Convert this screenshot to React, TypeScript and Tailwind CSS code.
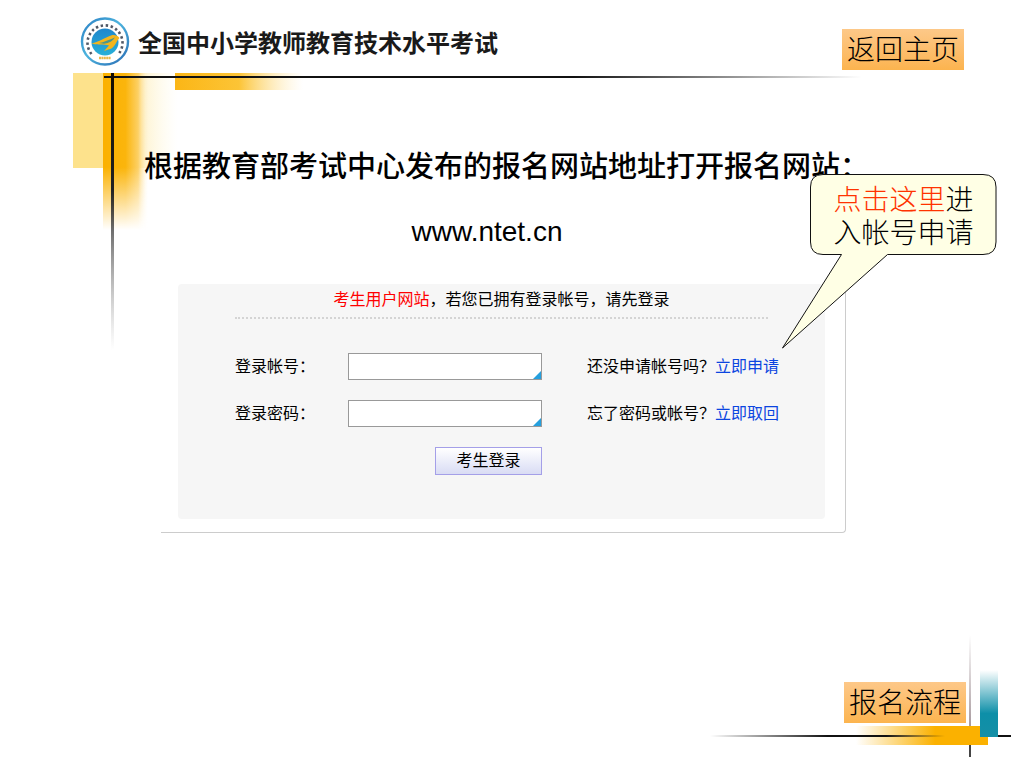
import type { ReactNode } from 'react';

const fields = [
  {
    id: 'account',
    label: '登录帐号：',
    type: 'text',
    question: '还没申请帐号吗？',
    action: '立即申请',
  },
  {
    id: 'password',
    label: '登录密码：',
    type: 'password',
    question: '忘了密码或帐号？',
    action: '立即取回',
  },
];

function Logo() {
  return (
    <svg width="50" height="50" viewBox="0 0 50 50" className="shrink-0" aria-hidden="true">
      <defs>
        <linearGradient id="ring" x1="0" y1="0" x2="1" y2="1">
          <stop offset="0" stopColor="#2b7fc4" />
          <stop offset="0.45" stopColor="#4db4de" />
          <stop offset="1" stopColor="#2a6cb4" />
        </linearGradient>
        <linearGradient id="globe" x1="0" y1="0" x2="0" y2="1">
          <stop offset="0" stopColor="#1f86cc" />
          <stop offset="1" stopColor="#27b0d8" />
        </linearGradient>
      </defs>
      <circle cx="25" cy="24.5" r="23" fill="#fff" stroke="url(#ring)" strokeWidth="2.4" />
      <path
        d="M11.5 37 A17.5 17.5 0 1 1 38.5 37"
        fill="none"
        stroke="#505866"
        strokeWidth="2.6"
        strokeDasharray="2.4 2.6"
      />
      <circle cx="25" cy="25" r="13.5" fill="url(#globe)" />
      <path d="M19 41 H31" fill="none" stroke="#e8b84a" strokeWidth="2.6" strokeDasharray="2 0.4" />
      <path
        d="M11.5 26.5 C19 25 26 20 31 18.5 C34 17.5 37 18 39.5 21 C37 23 36 28 31.5 31.5 C29 32.5 26.5 33 24 34 L29 28.5 C24 27 18 28.5 11.5 26.5Z"
        fill="#f3b51c"
      />
      <path d="M19 26 C24 25.5 29 22.5 35 20.5 C33 24 29 26 24 26.8Z" fill="#4a958c" />
    </svg>
  );
}

function TopDecoration() {
  return (
    <svg width="100%" height="360" className="pointer-events-none absolute inset-x-0 top-0" aria-hidden="true">
      <defs>
        <linearGradient id="goldRight">
          <stop offset="0" stopColor="#fbb100" />
          <stop offset="0.5" stopColor="#fbb50c" />
          <stop offset="0.78" stopColor="#fdd065" />
          <stop offset="1" stopColor="#fef0c8" stopOpacity="0" />
        </linearGradient>
        <linearGradient id="paleRight">
          <stop offset="0" stopColor="#fde6a4" />
          <stop offset="0.5" stopColor="#fef2cc" />
          <stop offset="1" stopColor="#fffbe8" stopOpacity="0" />
        </linearGradient>
        <linearGradient id="fadeDown" x1="0" y1="0" x2="0" y2="1">
          <stop offset="0" stopColor="#fff" />
          <stop offset="0.6" stopColor="#fff" />
          <stop offset="1" stopColor="#000" />
        </linearGradient>
        <mask id="goldMask">
          <rect x="100" y="73" width="60" height="157" fill="url(#fadeDown)" />
        </mask>
        <linearGradient id="barRight">
          <stop offset="0" stopColor="#fbb616" />
          <stop offset="0.5" stopColor="#fcc436" />
          <stop offset="1" stopColor="#fee9b0" stopOpacity="0" />
        </linearGradient>
        <linearGradient id="lineRight">
          <stop offset="0" stopColor="#111" />
          <stop offset="0.62" stopColor="#111" />
          <stop offset="1" stopColor="#111" stopOpacity="0" />
        </linearGradient>
        <linearGradient id="lineDown" x1="0" y1="0" x2="0" y2="1">
          <stop offset="0" stopColor="#140c00" />
          <stop offset="0.42" stopColor="#222" />
          <stop offset="1" stopColor="#888" stopOpacity="0" />
        </linearGradient>
      </defs>
      <rect x="73" y="73" width="31" height="95" fill="#fde28c" />
      <rect x="104" y="73" width="74" height="95" fill="url(#paleRight)" />
      <rect x="103" y="73" width="45" height="157" fill="url(#goldRight)" mask="url(#goldMask)" />
      <rect x="175" y="73" width="128" height="17" fill="url(#barRight)" />
      <rect x="104" y="76" width="74%" height="2" fill="url(#lineRight)" />
      <rect x="111" y="73" width="3" height="277" fill="url(#lineDown)" />
    </svg>
  );
}

function BottomDecoration() {
  return (
    <svg width="324" height="148" className="pointer-events-none absolute bottom-0 right-0" aria-hidden="true">
      <defs>
        <linearGradient id="goldBar">
          <stop offset="0" stopColor="#fbb100" stopOpacity="0" />
          <stop offset="0.6" stopColor="#fbb100" />
          <stop offset="1" stopColor="#fbb100" />
        </linearGradient>
        <linearGradient id="baseLine">
          <stop offset="0" stopColor="#111" stopOpacity="0" />
          <stop offset="0.5" stopColor="#111" />
          <stop offset="0.75" stopColor="#111" />
          <stop offset="1" stopColor="#111" stopOpacity="0" />
        </linearGradient>
        <linearGradient id="sideLine" x1="0" y1="0" x2="0" y2="1">
          <stop offset="0" stopColor="#a89a9e" stopOpacity="0" />
          <stop offset="1" stopColor="#a89a9e" />
        </linearGradient>
        <linearGradient id="teal" x1="0" y1="0" x2="0" y2="1">
          <stop offset="0" stopColor="#0d8fa8" stopOpacity="0" />
          <stop offset="0.65" stopColor="#0d8fa8" />
          <stop offset="1" stopColor="#158fa6" />
        </linearGradient>
      </defs>
      <rect x="156" y="106" width="132" height="19" fill="url(#goldBar)" />
      <rect x="10" y="115" width="235" height="2" fill="url(#baseLine)" />
      <rect x="269" y="15" width="2" height="91" fill="url(#sideLine)" />
      <rect x="269" y="125" width="2" height="12" fill="#444" />
      <rect x="280" y="50" width="18" height="67" fill="url(#teal)" />
      <rect x="298" y="115" width="13" height="2" fill="#111" />
    </svg>
  );
}

function NavButton({ children }: { children: ReactNode }) {
  return (
    <button
      type="button"
      className="h-[41px] w-[122px] shrink-0 whitespace-nowrap bg-linear-to-b from-[#fdc888] to-[#fcb44e] pt-[2px] text-[28px] leading-[39px] font-light text-black"
    >
      {children}
    </button>
  );
}

function Callout() {
  return (
    <div className="absolute -top-[100px] left-[621px] h-[176px] w-[215px]">
      <svg width="215" height="176" viewBox="0 0 215 176" className="absolute inset-0" aria-hidden="true">
        <path
          d="M41 .5H201Q214 .5 214 13V68Q214 80.5 201 80.5H105.5L.5 174L59.5 80.5H41Q28.5 80.5 28.5 68V13Q28.5 .5 41 .5Z"
          fill="#ffffe5"
          stroke="#111"
        />
      </svg>
      <p className="relative ml-7 pt-[10px] text-center text-[28px] leading-[33px] font-light">
        <span className="text-[#ff3300]">点击这里</span>进
        <br />
        入帐号申请
      </p>
    </div>
  );
}

export default function App() {
  return (
    <div className="relative flex min-h-screen flex-col overflow-hidden bg-white font-['Liberation_Sans','Noto_Sans_CJK_SC',sans-serif] text-black">
      <TopDecoration />
      <BottomDecoration />

      <header className="relative flex items-start justify-between pl-20 pr-[60px]">
        <div className="flex items-start gap-2 pt-[17px]">
          <Logo />
          <h1 className="whitespace-nowrap text-[24px] leading-[54px] font-bold text-[#1a1a1a]">全国中小学教师教育技术水平考试</h1>
        </div>
        <div className="pt-[29px]">
          <NavButton>返回主页</NavButton>
        </div>
      </header>

      <main className="relative pl-36 pr-[178px] pt-[76px]">
        <h2 className="whitespace-nowrap text-[29px] leading-[40px] font-medium">
          根据教育部考试中心发布的报名网站地址打开报名网站：
        </h2>
        <p className="mt-6 pr-4 text-center text-[28px] leading-[42px]">www.ntet.cn</p>

        {/* Login card */}
        <div className="relative ml-[17px] mt-[21px] rounded-br-sm border-b border-r border-[#ccc] pb-[13px] pl-[17px] pr-5 pt-[10px]">
          <form className="rounded bg-[#f6f6f6] px-[57px] pb-11 text-[16px] leading-6" onSubmit={(e) => e.preventDefault()}>
            <p className="whitespace-nowrap border-b-2 border-dotted border-[#d4d4d4] pb-[5px] pt-1 text-center">
              <span className="text-[#f00]">考生用户网站</span>，若您已拥有登录帐号，请先登录
            </p>
            <div className="mt-[34px] flex flex-col gap-5">
              {fields.map((field) => (
                <div key={field.id} className="flex items-center">
                  <label htmlFor={field.id} className="w-[113px] shrink-0 whitespace-nowrap">
                    {field.label}
                  </label>
                  <div className="relative h-[27px] w-[194px] shrink-0">
                    <input id={field.id} type={field.type} className="block h-full w-full border border-[#999] bg-white px-1 outline-none" />
                    <svg width="8" height="8" viewBox="0 0 8 8" className="absolute bottom-px right-px" aria-hidden="true">
                      <path d="M8 0V8H0Z" fill="#259fdd" />
                    </svg>
                  </div>
                  <span className="ml-[45px] whitespace-nowrap">{field.question}</span>
                  <a href="#" className="whitespace-nowrap text-[#0b45e0]">
                    {field.action}
                  </a>
                </div>
              ))}
            </div>
            <button
              type="submit"
              className="ml-[200px] mt-5 block h-7 w-[107px] border border-[#a49fe8] bg-linear-to-b from-white to-[#d9dcf4] leading-6"
            >
              考生登录
            </button>
          </form>
          <Callout />
        </div>
      </main>

      <footer className="relative mt-auto flex justify-end pb-[45px] pr-[58px]">
        <NavButton>报名流程</NavButton>
      </footer>
    </div>
  );
}
